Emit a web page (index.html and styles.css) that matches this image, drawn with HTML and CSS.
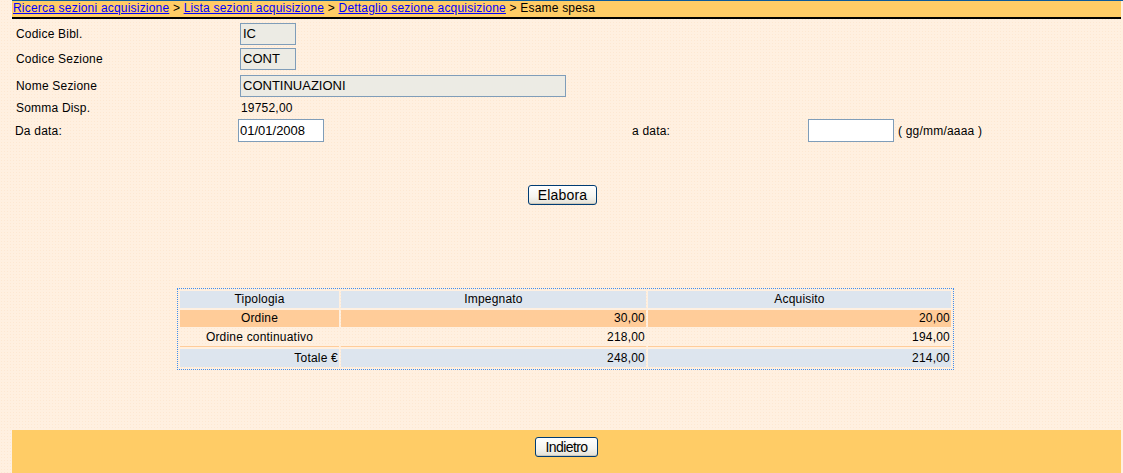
FILE: index.html
```html
<!DOCTYPE html>
<html lang="it">
<head>
<meta charset="utf-8">
<title>Esame spesa</title>
<link rel="stylesheet" href="styles.css">
</head>
<body>
<div class="page">
  <div class="topline"></div>
  <div class="crumbs">
    <a href="#">Ricerca sezioni acquisizione</a> &gt; <a href="#">Lista sezioni acquisizione</a> &gt; <a href="#">Dettaglio sezione acquisizione</a> &gt; Esame spesa
  </div>

  <div class="form">
    <div class="label">Codice Bibl.</div>
    <div><span class="field field-short">IC</span></div>
    <div class="label">Codice Sezione</div>
    <div><span class="field field-short">CONT</span></div>
    <div class="label">Nome Sezione</div>
    <div><span class="field field-long">CONTINUAZIONI</span></div>
    <div class="label">Somma Disp.</div>
    <div class="value">19752,00</div>
  </div>

  <div class="dates">
    <div class="label label-date">Da data:</div>
    <div><input class="date" type="text" value="01/01/2008"></div>
    <div class="label">a data:</div>
    <div><input class="date" type="text" value=""></div>
    <div class="hint">( gg/mm/aaaa )</div>
  </div>

  <div class="actions">
    <button class="btn btn-elabora" type="button">Elabora</button>
  </div>

  <table class="summary">
    <thead>
      <tr class="row-head">
        <th class="col-tipo">Tipologia</th>
        <th class="col-imp">Impegnato</th>
        <th class="col-acq">Acquisito</th>
      </tr>
    </thead>
    <tbody>
      <tr class="row-hl">
        <td class="center">Ordine</td>
        <td class="num">30,00</td>
        <td class="num">20,00</td>
      </tr>
      <tr class="row-plain">
        <td class="center">Ordine continuativo</td>
        <td class="num">218,00</td>
        <td class="num">194,00</td>
      </tr>
      <tr class="row-total">
        <td class="num">Totale €</td>
        <td class="num">248,00</td>
        <td class="num">214,00</td>
      </tr>
    </tbody>
  </table>

  <div class="footer">
    <button class="btn btn-back" type="button">Indietro</button>
  </div>
</div>
</body>
</html>
```

FILE: styles.css
```css
html, body {
  margin: 0;
  padding: 0;
  height: 100%;
  overflow: hidden;
}

body {
  background-color: #fff0e0;
  background-image: radial-gradient(#fde8d2 0.6px, transparent 0.8px);
  background-size: 3px 3px;
  font-family: "Liberation Sans", Arial, sans-serif;
  font-size: 12px;
  letter-spacing: 0.2px;
  color: #000;
}

.page {
  padding: 0 0 0 12px;
}

.topline {
  height: 1px;
  background: #0a5a9c;
}

.crumbs {
  height: 16px;
  line-height: 15px;
  background: #ffcc66;
  border-bottom: 2px solid #000;
  margin-right: 2px;
  padding-left: 1px;
  white-space: nowrap;
  font-size: 12px;
}

.crumbs a {
  color: #0000ff;
  text-decoration: underline;
}

.form {
  display: grid;
  grid-template-columns: 224px 1fr;
  grid-template-rows: 26px 24px 30px 14px;
  align-items: center;
  margin-top: 2px;
  padding-left: 4px;
}

.label {
  font-size: 12px;
}

.value {
  padding-left: 1px;
}

.field {
  display: block;
  box-sizing: border-box;
  height: 22px;
  line-height: 20px;
  border: 1px solid #7f9db9;
  background: #ecebe4;
  font-size: 13px;
  letter-spacing: 0;
  padding-left: 2px;
  white-space: nowrap;
}

.field-short {
  width: 56px;
}

.field-long {
  width: 326px;
}

.dates {
  display: grid;
  grid-template-columns: 223px 394px 176px 90px auto;
  align-items: center;
  height: 31px;
  padding-left: 3px;
}

.date {
  display: block;
  box-sizing: border-box;
  width: 86px;
  height: 23px;
  margin: 0;
  border: 1px solid #7f9db9;
  background: #fff;
  font-family: "Liberation Sans", Arial, sans-serif;
  font-size: 13px;
  padding: 0 1px;
  color: #000;
}

.hint {
  font-size: 12px;
}

.actions {
  display: flex;
  justify-content: center;
  margin-top: 39px;
  padding-right: 10px;
}

.btn {
  box-sizing: border-box;
  height: 20px;
  margin: 0;
  padding: 0;
  border: 1px solid #003c74;
  border-radius: 3px;
  background: linear-gradient(#ffffff, #f5f4ef 60%, #e3e0d6);
  box-shadow: inset 0 -1px 0 #cdc8ba;
  font-family: "Liberation Sans", Arial, sans-serif;
  font-size: 14px;
  letter-spacing: 0.2px;
  color: #000;
  line-height: 17px;
}

.btn-elabora {
  width: 69px;
}

.btn-back {
  width: 63px;
  font-size: 14px;
  letter-spacing: -0.6px;
}

.summary {
  width: 777px;
  table-layout: fixed;
  margin: 83px auto 0;
  border: 1px dotted #3f8ef0;
  border-collapse: separate;
  border-spacing: 2px;
  font-size: 12px;
  position: relative;
  left: -2px;
}

.summary th,
.summary td {
  padding: 0 1px;
  font-weight: normal;
  height: 17px;
  line-height: 17px;
  white-space: nowrap;
}

.col-tipo {
  width: 157px;
}

.col-imp {
  width: 303px;
}

.col-acq {
  width: 301px;
}

.row-head th {
  background: #dde5ee;
  text-align: center;
}

.row-hl td {
  background: #ffcc99;
}

.row-plain td {
  border-bottom: 1px solid #ffcc99;
  height: 17px;
  line-height: 17px;
}

.row-total td {
  background: #dde5ee;
  height: 18px;
  line-height: 18px;
}

.center {
  text-align: center;
}

.num {
  text-align: right;
}

.footer {
  height: 43px;
  margin-top: 60px;
  margin-right: 2px;
  background: #ffcc66;
  box-sizing: border-box;
  padding-top: 7px;
  display: flex;
  justify-content: center;
  align-items: flex-start;
}
```
